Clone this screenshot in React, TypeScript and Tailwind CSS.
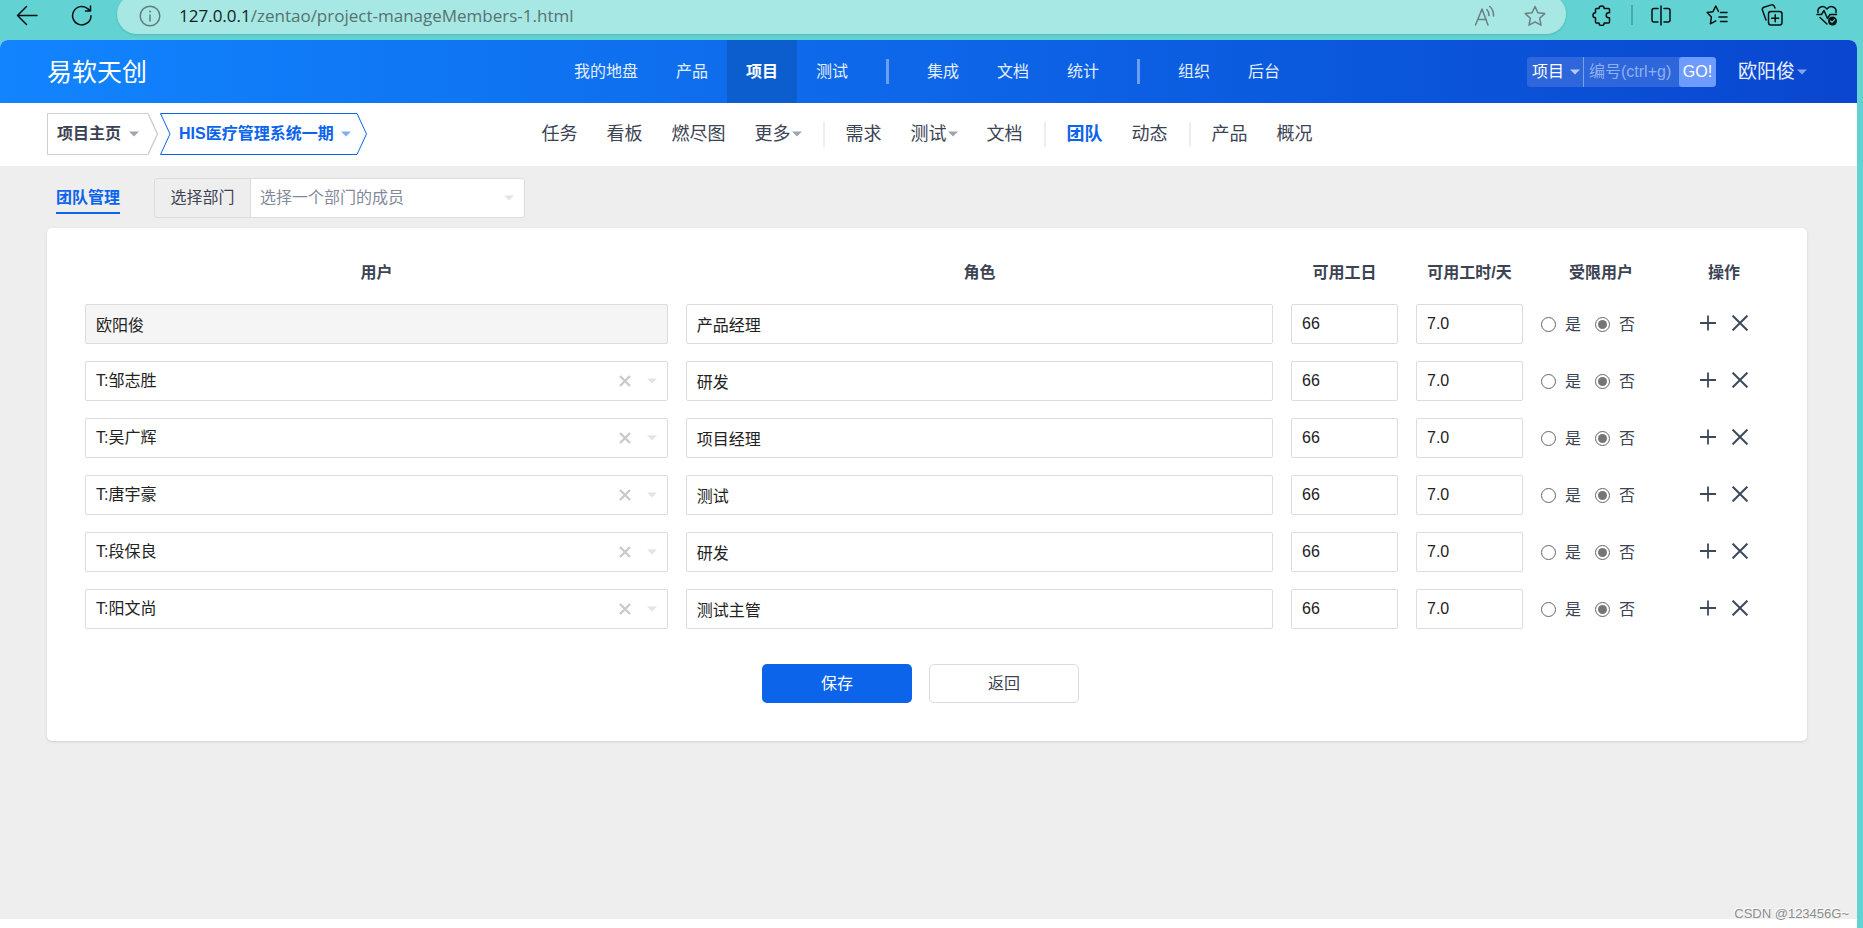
import type { ReactNode } from 'react';

type Member = { id: number; name: string; role: string; fixed?: boolean };

const members: Member[] = [
  { id: 1, name: '欧阳俊', role: '产品经理', fixed: true },
  { id: 2, name: 'T:邹志胜', role: '研发' },
  { id: 3, name: 'T:吴广辉', role: '项目经理' },
  { id: 4, name: 'T:唐宇豪', role: '测试' },
  { id: 5, name: 'T:段保良', role: '研发' },
  { id: 6, name: 'T:阳文尚', role: '测试主管' },
];

const mainNav: string[][] = [
  ['我的地盘', '产品', '项目', '测试'],
  ['集成', '文档', '统计'],
  ['组织', '后台'],
];

type SubItem = { label: string; caret?: boolean; active?: boolean };

const subNav: SubItem[][] = [
  [{ label: '任务' }, { label: '看板' }, { label: '燃尽图' }, { label: '更多', caret: true }],
  [{ label: '需求' }, { label: '测试', caret: true }, { label: '文档' }],
  [{ label: '团队', active: true }, { label: '动态' }],
  [{ label: '产品' }, { label: '概况' }],
];

function Caret({ className }: { className: string }) {
  return (
    <svg viewBox="0 0 10 6" className={`h-[6px] w-[10px] shrink-0 ${className}`} fill="currentColor" aria-hidden="true">
      <path d="M0 0.5h10L5 5.5z" />
    </svg>
  );
}

function Glyph({ children, className = 'size-[22px]' }: { children: ReactNode; className?: string }) {
  return (
    <svg
      viewBox="0 0 22 22"
      className={`block shrink-0 ${className}`}
      fill="none"
      stroke="currentColor"
      strokeWidth="1.5"
      strokeLinecap="round"
      strokeLinejoin="round"
      aria-hidden="true"
    >
      {children}
    </svg>
  );
}

function BrowserBar() {
  return (
    <div className="flex h-10 items-start overflow-hidden bg-[#62d2d2] pr-[25px] pl-4 text-[#071212]">
      <button type="button" aria-label="后退" className="mt-1">
        <Glyph>
          <path d="M21 11.5H1.5M10.5 2.5l-9 9 9 9" />
        </Glyph>
      </button>
      <button type="button" aria-label="刷新" className="mt-1 ml-[33px]">
        <Glyph>
          <path d="M20 11.7a9.2 9.2 0 1 1-3-6.8l2 2M19.5 2v5h-5" />
        </Glyph>
      </button>
      <div className="-mt-1.5 ml-6 flex h-10 flex-1 items-center rounded-full bg-[#a7e7e4] pt-1 pr-5 pl-[22px] shadow-sm">
        <Glyph className="size-[22px] text-[#5e7f7e]">
          <circle cx="11" cy="11" r="9.8" />
          <path d="M11 10v6" />
          <path d="M11 6.4v.2" strokeWidth="2" />
        </Glyph>
        <p className="ml-[18px] flex-1 font-['Open_Sans','Noto_Sans',sans-serif] text-[17px] leading-6 text-[#557371]">
          <span className="text-[#111f1f]">127.0.0.1</span>/zentao/project-manageMembers-1.html
        </p>
        <button type="button" aria-label="朗读" className="text-[#6b8080]">
          <Glyph>
            <path d="M1.5 20L8 4l6 16M3.700 14.500h8.600M12.800 4.500c1.500 1.500 2.300 3.500 2.200 6M15.800 1.500c2.700 2.500 3.900 6 3.700 9.500" />
          </Glyph>
        </button>
        <button type="button" aria-label="收藏" className="ml-7 text-[#6b8080]">
          <Glyph>
            <path d="M11 1.500l2.900 6.200 6.800.9-5 4.700 1.300 6.900-6-3.400-6 3.400 1.300-6.900-5-4.700 6.800-.9z" />
          </Glyph>
        </button>
      </div>
      <div className="mt-1 flex items-center">
        <button type="button" aria-label="扩展" className="ml-[25px]">
          <Glyph>
            <path d="M5.500 4.500H8a2.600 2.600 0 0 1 5.200 0h4.300a1 1 0 0 1 1 1v3.300h-.8a2.500 2.500 0 0 0 0 5h.8v4.200a1 1 0 0 1-1 1h-4.300a2.600 2.600 0 0 1-5.200 0H5.500a1 1 0 0 1-1-1v-4.200a2.500 2.500 0 0 1 0-5V5.500a1 1 0 0 1 1-1z" />
          </Glyph>
        </button>
        <span className="ml-[18px] h-5 w-[2px] bg-[#4aa8a8]" />
        <button type="button" aria-label="拆分屏幕" className="ml-[17px]">
          <Glyph>
            <path d="M11 2v19M8 4.500H4a2 2 0 0 0-2 2v9.500a2 2 0 0 0 2 2h4M14 4.500h4a2 2 0 0 1 2 2v9.500a2 2 0 0 1-2 2h-4" />
          </Glyph>
        </button>
        <button type="button" aria-label="收藏夹" className="ml-[34px]">
          <Glyph>
            <path d="M12.500 7.500L9.800 2 7 7.700l-5.800.9 4.200 4.400-1 6.800 5.400-2.900M14.500 8.500h6.500M13 13h8M14.500 17.500h6.500" />
          </Glyph>
        </button>
        <button type="button" aria-label="集锦" className="ml-[33px]">
          <Glyph>
            <rect x="7.500" y="7.500" width="13.500" height="13.500" rx="2.500" />
            <path d="M14.200 10.700v7M10.700 14.200h7M5 16L1.500 6.200a2.400 2.400 0 0 1 1.400-3l7.500-2.300a2.400 2.400 0 0 1 3 1.600l.6 1.500" />
          </Glyph>
        </button>
        <button type="button" aria-label="浏览器概要" className="ml-[33px]">
          <Glyph>
            <path d="M2 8.500C1 3 7.500 0.500 11 5c3.500-4.500 10-2 9 3.500M1 10.500h4.500l2.500-4 3.500 8 2.500-4h6.500M4 13.500l7 6.500" />
            <circle cx="16.500" cy="17" r="4.500" fill="currentColor" stroke="none" />
            <path d="M14.600 17l1.400 1.400 2.600-2.700" stroke="#62d2d2" strokeWidth="1.200" />
          </Glyph>
        </button>
      </div>
    </div>
  );
}

function Header() {
  return (
    <header className="grid h-[63px] grid-cols-[1fr_auto_1fr] items-center rounded-t-lg bg-linear-to-r from-[#1284fe] via-[#0e66e8] to-[#0a46cf] pr-[50px] pl-[47px] text-white">
      <a href="#home" className="justify-self-start text-[25px] leading-8">
        易软天创
      </a>
      <nav className="flex h-full items-center" aria-label="主导航">
        {mainNav.map((group, i) => (
          <div key={i} className="flex h-full items-center">
            {i > 0 && <span className="mx-[19px] h-[25px] w-[3px] bg-[#6c9ff3]" />}
            {group.map((label) => (
              <a
                key={label}
                href="#nav"
                className={
                  label === '项目'
                    ? 'flex h-full items-center bg-[#0c5dcd] px-[19px] text-base font-bold'
                    : 'flex h-full items-center px-[19px] text-base text-[#e3eefd]'
                }
              >
                {label}
              </a>
            ))}
          </div>
        ))}
      </nav>
      <div className="flex items-center justify-self-end">
        <form className="flex h-[30px] items-stretch overflow-hidden rounded-[3px] bg-[#2e66db]" onSubmit={(e) => e.preventDefault()}>
          <div className="relative flex items-center border-r border-[#7ba0ee]">
            <select aria-label="搜索类型" className="h-full w-14 appearance-none pl-[5px] text-base outline-none">
              <option>项目</option>
            </select>
            <Caret className="pointer-events-none absolute right-[3px] text-[#b7cdf6]" />
          </div>
          <input aria-label="编号" placeholder="编号(ctrl+g)" className="w-[95px] pl-[5px] text-base outline-none placeholder:text-[#8fb0f0]" />
          <button type="submit" className="w-[37px] rounded-[3px] bg-[#6e9bff] text-base">
            GO!
          </button>
        </form>
        <button type="button" className="ml-[22px] flex items-center gap-0.5 text-[19px] leading-6 text-[#e8f0fe]">
          欧阳俊
          <Caret className="text-[#80a4ec]" />
        </button>
      </div>
    </header>
  );
}

function Breadcrumb() {
  return (
    <div className="flex justify-self-start text-base font-bold">
      <a href="#projects" className="flex h-[42px] items-center text-[#3c4353]">
        <span className="flex h-full w-[101px] items-center gap-2 border-y border-l border-[#cbd0db] pl-[9px]">
          项目主页
          <Caret className="text-[#9ea3b0]" />
        </span>
        <svg viewBox="0 0 11 42" className="h-[42px] w-[11px]" fill="none" stroke="#cbd0db" aria-hidden="true">
          <path d="M0 .5L9.500 21 0 41.500" strokeWidth="1.500" />
        </svg>
      </a>
      <a href="#current" className="flex h-[42px] items-center text-[#0c64eb]">
        <svg viewBox="0 0 12 42" className="h-[42px] w-3" fill="none" stroke="currentColor" aria-hidden="true">
          <path d="M12 .5H1.500L11 21 1.500 41.500H12" />
        </svg>
        <span className="flex h-full items-center gap-[7px] border-y border-[#0c64eb] pr-1.5 pl-2">
          HIS医疗管理系统一期
          <Caret className="text-[#7eaef5]" />
        </span>
        <svg viewBox="0 0 11 42" className="h-[42px] w-[11px]" fill="none" stroke="currentColor" aria-hidden="true">
          <path d="M0 .5L9.500 21 0 41.500" />
        </svg>
      </a>
    </div>
  );
}

function SubHeader() {
  return (
    <div className="grid h-[63px] grid-cols-[1fr_auto_1fr] items-center bg-white pr-[50px] pb-px pl-[47px]">
      <Breadcrumb />
      <nav className="flex items-center" aria-label="项目导航">
        {subNav.map((group, i) => (
          <div key={i} className="flex items-center">
            {i > 0 && <span className="mx-[21px] h-[25px] w-0.5 bg-[#eeeeee]" />}
            <div className="flex items-center gap-[29px]">
              {group.map((item) => (
                <a
                  key={item.label}
                  href="#sub"
                  className={
                    item.active
                      ? 'flex items-center text-lg font-bold text-[#0c64eb]'
                      : 'flex items-center gap-px text-lg text-[#3c4353]'
                  }
                >
                  {item.label}
                  {item.caret && <Caret className="text-[#9ea3b0]" />}
                </a>
              ))}
            </div>
          </div>
        ))}
      </nav>
    </div>
  );
}

function DepartmentBar() {
  return (
    <div className="flex items-start pl-[9px]">
      <h1 className="mt-2 border-b-2 border-[#0c64eb] pb-0.5 text-base leading-6 font-bold text-[#0c64eb]">团队管理</h1>
      <div className="ml-[34px] flex h-10 rounded-[3px] border border-[#dcdcdc] text-base">
        <label htmlFor="dept" className="flex w-[95px] items-center justify-center text-[#3c4353]">
          选择部门
        </label>
        <div className="relative flex items-center rounded-r-[2px] border-l border-[#dcdcdc] bg-white">
          <select id="dept" className="h-full w-[273px] appearance-none pl-[9px] text-[#838a9d] outline-none">
            <option>选择一个部门的成员</option>
          </select>
          <Caret className="pointer-events-none absolute right-2.5 text-[#e2e4ec]" />
        </div>
      </div>
    </div>
  );
}

const field = 'block h-10 w-full rounded-[2px] border border-[#dcdcdc] bg-white px-[10px] text-base text-[#222222] outline-none';
const cell = 'h-[57px] px-[9px] py-0 align-middle';

function RadioOption({ member, label, checked }: { member: Member; label: string; checked?: boolean }) {
  return (
    <label className="flex items-center gap-[9px]">
      <input type="radio" name={`limited-${member.id}`} defaultChecked={checked} className="size-[15px] appearance-none rounded-full border border-[#666666] bg-white bg-clip-content p-[2px] checked:bg-[#767676]" />
      {label}
    </label>
  );
}

function MemberRow({ member }: { member: Member }) {
  return (
    <tr>
      <td className={cell}>
        {member.fixed ? (
          <input aria-label="用户" readOnly defaultValue={member.name} className="block h-10 w-full rounded-[2px] border border-[#dcdcdc] bg-[#f5f5f5] px-[10px] text-base text-[#222222] outline-none" />
        ) : (
          <div className="relative flex items-center">
            <select aria-label="用户" className={`appearance-none ${field}`}>
              <option>{member.name}</option>
            </select>
            <button type="button" aria-label="清除" className="absolute right-[37px] text-[#cacaca]">
              <svg viewBox="0 0 12 12" className="size-3" fill="none" stroke="currentColor" strokeWidth="2.400" aria-hidden="true">
                <path d="M1 1l10 10M11 1L1 11" />
              </svg>
            </button>
            <Caret className="pointer-events-none absolute right-[11px] text-[#e2e4ec]" />
          </div>
        )}
      </td>
      <td className={cell}>
        <input aria-label="角色" defaultValue={member.role} className={field} />
      </td>
      <td className={cell}>
        <input aria-label="可用工日" defaultValue="66" className={field} />
      </td>
      <td className={cell}>
        <input aria-label="可用工时/天" defaultValue="7.0" className={field} />
      </td>
      <td className={cell}>
        <div className="flex items-center gap-[14px] pt-0.5 text-base">
          <RadioOption member={member} label="是" />
          <RadioOption member={member} label="否" checked />
        </div>
      </td>
      <td className={cell}>
        <div className="flex items-center justify-center gap-4 pb-0.5 text-[#3c495c]">
          <button type="button" aria-label="添加">
            <svg viewBox="0 0 16 16" className="block size-4" fill="none" stroke="currentColor" strokeWidth="1.800" aria-hidden="true">
              <path d="M0 8h16M8 .5v15" />
            </svg>
          </button>
          <button type="button" aria-label="删除">
            <svg viewBox="0 0 16 16" className="block size-4" fill="none" stroke="currentColor" strokeWidth="2" aria-hidden="true">
              <path d="M.6.6l14.800 14.800M15.400.6L.6 15.400" />
            </svg>
          </button>
        </div>
      </td>
    </tr>
  );
}

export default function App() {
  return (
    <div className="relative flex min-h-screen flex-col bg-[#62d2d2] font-['Liberation_Sans','Noto_Sans_CJK_SC',sans-serif] text-[#3c4353]">
      <BrowserBar />
      <div className="mr-1.5 flex flex-1 flex-col rounded-t-lg bg-white">
        <Header />
        <SubHeader />
        <main className="mb-[9px] flex-1 bg-[#eeeeee] pt-3 pr-[50px] pl-[47px]">
          <DepartmentBar />
          <form className="mt-2.5 rounded-[5px] bg-white px-[29px] pt-[22px] pb-[38px] shadow" onSubmit={(e) => e.preventDefault()}>
            <table className="w-full table-fixed border-collapse">
              <thead>
                <tr className="h-[45px] text-base">
                  <th className="w-[35.3%]">用户</th>
                  <th>角色</th>
                  <th className="w-[125px]">可用工日</th>
                  <th className="w-[125px]">可用工时/天</th>
                  <th className="w-[138px]">受限用户</th>
                  <th className="w-[108px]">操作</th>
                </tr>
              </thead>
              <tbody>
                {members.map((m) => (
                  <MemberRow key={m.id} member={m} />
                ))}
              </tbody>
            </table>
            <div className="mt-[27px] flex justify-center gap-[17px] pr-[13px]">
              <button type="submit" className="h-[39px] w-[150px] rounded-[5px] bg-[#0c64eb] text-base text-white">
                保存
              </button>
              <button type="button" className="h-[39px] w-[150px] rounded-[5px] border border-[#d8dbe4] bg-white text-base">
                返回
              </button>
            </div>
          </form>
        </main>
      </div>
      <p className="absolute right-3.5 bottom-1.5 text-[13px] leading-4 text-[#8d8d8d] [text-shadow:-1px_-1px_0_#ffffff]">CSDN @123456G~</p>
    </div>
  );
}
